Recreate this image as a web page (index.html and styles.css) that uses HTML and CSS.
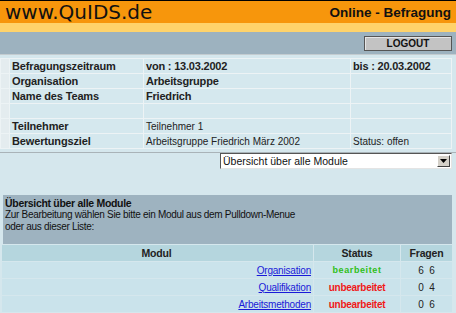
FILE: index.html
```html
<!DOCTYPE html>
<html lang="de">
<head>
    <meta charset="UTF-8">
    <title>QuIDS Online - Befragung</title>
    <link rel="stylesheet" href="styles.css">
</head>
<body>

<div class="top">
    <div class="brand">www.QuIDS.de</div>
    <div class="title">Online - Befragung</div>
</div>
<div class="stripe"></div>
<div class="bar">
    <button class="logout">LOGOUT</button>
</div>

<table class="info">
    <tr>
        <td class="edge"></td>
        <td class="label">Befragungszeitraum</td>
        <td class="value">von : 13.03.2002</td>
        <td class="value">bis : 20.03.2002</td>
    </tr>
    <tr>
        <td class="edge"></td>
        <td class="label">Organisation</td>
        <td class="value">Arbeitsgruppe</td>
        <td></td>
    </tr>
    <tr>
        <td class="edge"></td>
        <td class="label">Name des Teams</td>
        <td class="value">Friedrich</td>
        <td></td>
    </tr>
    <tr>
        <td class="edge"></td>
        <td></td>
        <td></td>
        <td></td>
    </tr>
    <tr>
        <td class="edge"></td>
        <td class="label">Teilnehmer</td>
        <td>Teilnehmer 1</td>
        <td></td>
    </tr>
    <tr>
        <td class="edge"></td>
        <td class="label">Bewertungsziel</td>
        <td>Arbeitsgruppe Friedrich März 2002</td>
        <td>Status: offen</td>
    </tr>
</table>

<div class="chooser">
    <div class="select-box">
        <select class="modules">
            <option>Übersicht über alle Module</option>
        </select>
        <!-- old style drop button drawn over the select -->
        <span class="drop">
            <svg width="7" height="4" viewBox="0 0 7 4"><polygon points="0,0 7,0 3.5,4" fill="#000"/></svg>
        </span>
    </div>
</div>

<div class="overview">
    <div class="overview-title">Übersicht über alle Module</div>
    <div class="overview-text">Zur Bearbeitung wählen Sie bitte ein Modul aus dem Pulldown-Menue<br>oder aus dieser Liste:</div>
</div>

<table class="list">
    <tr>
        <th class="col-modul">Modul</th>
        <th class="col-status">Status</th>
        <th class="col-fragen">Fragen</th>
    </tr>
    <tr>
        <td class="col-modul"><a href="#">Organisation</a></td>
        <td class="col-status done">bearbeitet</td>
        <td class="col-fragen">6&nbsp;&nbsp;6</td>
    </tr>
    <tr>
        <td class="col-modul"><a href="#">Qualifikation</a></td>
        <td class="col-status open">unbearbeitet</td>
        <td class="col-fragen">0&nbsp;&nbsp;4</td>
    </tr>
    <tr>
        <td class="col-modul"><a href="#">Arbeitsmethoden</a></td>
        <td class="col-status open">unbearbeitet</td>
        <td class="col-fragen">0&nbsp;&nbsp;6</td>
    </tr>
</table>

</body>
</html>
```

FILE: styles.css
```css
body {
    margin: 0;
    font-family: "Liberation Sans", Arial, sans-serif;
    font-size: 10px;
    color: #222;
    background-color: #d5e7ed;
}
.top {
    display: flex;
    justify-content: space-between;
    align-items: center;
    height: 22px;
    padding: 0 5px;
    border-top: 1px solid #000;
    background-color: #f7960c;
}
.brand {
    font-family: "DejaVu Sans", Verdana, sans-serif;
    font-size: 20px;
    color: #111;
    line-height: 22px;
}
.title {
    font-size: 13.5px;
    font-weight: bold;
    color: #111;
}
.stripe {
    height: 9px;
    background-color: #ffd36b;
}
.bar {
    display: flex;
    justify-content: flex-end;
    align-items: center;
    height: 22px;
    padding-right: 4px;
    background-color: #9db2bf;
    border-bottom: 1px solid #c4ccd0;
}
.logout {
    width: 88px;
    height: 15px;
    padding: 0;
    font-family: "Liberation Sans", Arial, sans-serif;
    font-size: 10px;
    font-weight: bold;
    color: #111;
    background-color: #c3c3c3;
    border: 1px solid #555;
    box-shadow: inset 1px 1px 0 #e6e6e6;
}
.info {
    width: 452px;
    margin: 3px 0 3px 0;
    border-spacing: 1px;
    background-color: #edf3f5;
}
.info td {
    height: 14px;
    padding: 0 0 0 2px;
    background-color: #d5e8ee;
    white-space: nowrap;
}
.info .edge {
    width: 6px;
    background-color: #e4ecef;
}
.info .label {
    width: 131px;
    font-size: 11px;
    font-weight: bold;
    letter-spacing: -0.15px;
}
.info td:nth-child(3) {
    width: 204px;
}
.info .value {
    font-size: 11px;
    font-weight: bold;
    letter-spacing: -0.2px;
}
.chooser {
    display: flex;
    justify-content: flex-end;
    padding: 0 4px 0 0;
    border-top: 1px solid #a9b3b8;
}
.select-box {
    position: relative;
    width: 232px;
    height: 16px;
}
.modules {
    appearance: none;
    width: 100%;
    height: 16px;
    padding: 0 0 0 2px;
    font-family: "Liberation Sans", Arial, sans-serif;
    font-size: 10.5px;
    color: #111;
    background-color: #fff;
    border: 1px solid;
    border-color: #555 #e4e4e4 #e4e4e4 #555;
    border-radius: 0;
}
.drop {
    position: absolute;
    top: 2px;
    right: 2px;
    width: 13px;
    height: 12px;
    display: flex;
    align-items: center;
    justify-content: center;
    background-color: #d4d0c8;
    border: 1px solid;
    border-color: #fff #404040 #404040 #fff;
    box-sizing: border-box;
}
.overview {
    margin: 26px 4px 0 3px;
    padding: 2px 2px 11px 2px;
    background-color: #9eb3c0;
    line-height: 12px;
    color: #111;
}
.overview-title {
    font-size: 10.5px;
    font-weight: bold;
    letter-spacing: -0.3px;
}
.overview-text {
    letter-spacing: -0.3px;
}
.list {
    width: 452px;
    margin-left: 1px;
    border-spacing: 1px;
    background-color: #d5e7ed;
}
.list th {
    height: 16px;
    padding: 0;
    font-size: 10.5px;
    font-weight: bold;
    letter-spacing: -0.2px;
    background-color: #b5d6de;
}
.list td {
    height: 16px;
    padding: 0;
    background-color: #cae3eb;
}
.list .col-modul {
    width: 309px;
    text-align: right;
    padding-right: 2px;
}
.list th.col-modul {
    text-align: center;
}
.list .col-status {
    width: 86px;
    text-align: center;
}
.list .col-fragen {
    text-align: center;
}
.list a {
    color: #1a1ad8;
    letter-spacing: -0.2px;
}
.done {
    color: #2fbf17;
    font-size: 9px;
    font-weight: bold;
    letter-spacing: 0.6px;
}
.open {
    color: #f01818;
    font-weight: bold;
    letter-spacing: -0.3px;
}
```
